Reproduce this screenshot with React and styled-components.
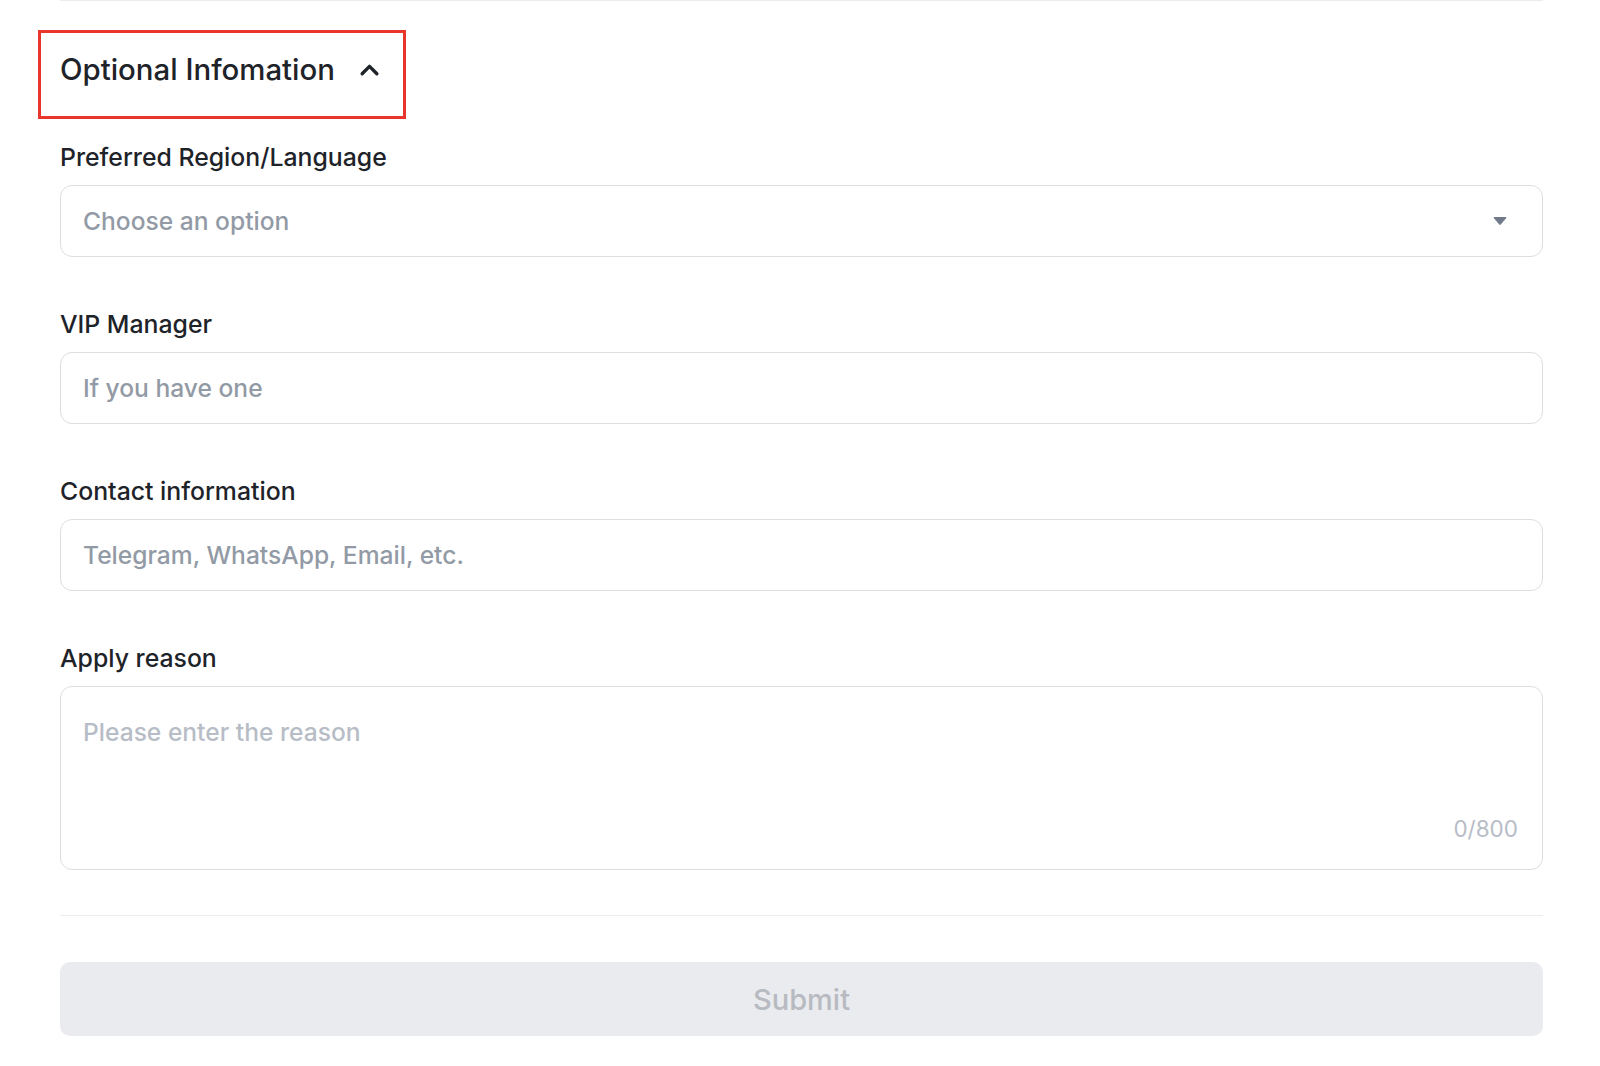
import styled, { createGlobalStyle } from "styled-components";

const GlobalStyle = createGlobalStyle`
  html, body {
    margin: 0;
    padding: 0;
    background: #fff;
    overflow: hidden;
  }
  body {
    font-family: "Inter", "Noto Sans", sans-serif;
    color: #1e2329;
  }
  * {
    box-sizing: border-box;
  }
`;

const Page = styled.div`
  padding: 0 57px 0 60px;
`;

const TopRule = styled.div`
  height: 1px;
  background: #eaecef;
`;

const SectionHeader = styled.div`
  display: inline-flex;
  align-items: center;
  gap: 24px;
  margin: 29px 0 0 -22px;
  height: 89px;
  padding: 0 23px 10px 19px;
  border: 3px solid #e8372a;
`;

const SectionTitle = styled.h2`
  margin: 0;
  font-size: 29.4px;
  font-weight: 500;
  color: #1e2329;
`;

const Fields = styled.div`
  display: flex;
  flex-direction: column;
  gap: 51px;
  margin-top: 22px;
`;

const Field = styled.div`
  display: flex;
  flex-direction: column;
  gap: 12px;
`;

const Label = styled.label`
  font-size: 24.8px;
  line-height: 32px;
  font-weight: 500;
  color: #1e2329;
`;

const Box = styled.div`
  position: relative;
  display: flex;
  align-items: ${(p) => (p.multiline ? "flex-start" : "center")};
  height: ${(p) => (p.multiline ? "184px" : "72px")};
  padding: ${(p) => (p.multiline ? "30px 22px" : "0 34px 0 22px")};
  border: 1.5px solid #dcdee2;
  border-radius: 12px;
  background: #fff;
`;

const Placeholder = styled.span`
  flex: 1;
  font-size: 24.6px;
  font-weight: 500;
  color: ${(p) => (p.light ? "#b7bdc6" : "#929aa5")};
`;

const Counter = styled.span`
  position: absolute;
  right: 24px;
  bottom: 27px;
  font-size: 22.5px;
  color: #b7bdc6;
`;

const Divider = styled.div`
  height: 1px;
  background: #eaecef;
  margin: 45px 0 46px;
`;

const SubmitButton = styled.button`
  width: 100%;
  height: 74px;
  border: none;
  border-radius: 10px;
  background: #eaebef;
  font-family: inherit;
  font-size: 29px;
  font-weight: 500;
  color: #b7bac0;
`;

const ChevronUp = () => (
  <svg width="21" height="15" viewBox="0 0 20 14">
    <path
      d="M3 11 L10 4 L17 11"
      fill="none"
      stroke="#1e2329"
      strokeWidth="3.2"
      strokeLinecap="round"
      strokeLinejoin="round"
    />
  </svg>
);

const Caret = () => (
  <svg width="16" height="12" viewBox="0 0 16 12">
    <path
      d="M2.5 2 H13.5 Q15 2 14 3.3 L9 9.2 Q8 10.3 7 9.2 L2 3.3 Q1 2 2.5 2 Z"
      fill="#707a8a"
    />
  </svg>
);

const fields = [
  { label: "Preferred Region/Language", placeholder: "Choose an option", select: true },
  { label: "VIP Manager", placeholder: "If you have one" },
  { label: "Contact information", placeholder: "Telegram, WhatsApp, Email, etc." },
];

const App = () => {
  return (
    <>
      <GlobalStyle />
      <Page>
        <TopRule />
        <SectionHeader>
          <SectionTitle>Optional Infomation</SectionTitle>
          <ChevronUp />
        </SectionHeader>
        <Fields>
          {fields.map((f) => (
            <Field key={f.label}>
              <Label>{f.label}</Label>
              <Box>
                <Placeholder>{f.placeholder}</Placeholder>
                {f.select && <Caret />}
              </Box>
            </Field>
          ))}
          <Field>
            <Label>Apply reason</Label>
            <Box multiline>
              <Placeholder light>Please enter the reason</Placeholder>
              <Counter>0/800</Counter>
            </Box>
          </Field>
        </Fields>
        <Divider />
        <SubmitButton>Submit</SubmitButton>
      </Page>
    </>
  );
};

export default App;
